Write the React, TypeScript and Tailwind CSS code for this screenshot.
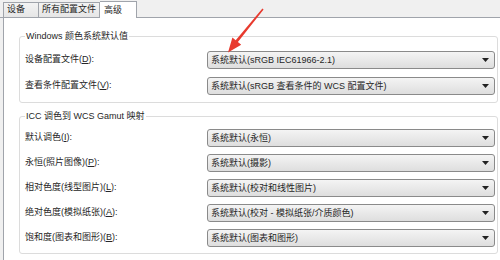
import React from "react";

type Row = { pre: string; key: string; value: string };

const grupo1: Row[] = [
  { pre: "设备配置文件(", key: "D", value: "系统默认(sRGB IEC61966-2.1)" },
  { pre: "查看条件配置文件(", key: "V", value: "系统默认(sRGB 查看条件的 WCS 配置文件)" },
];

const grupo2: Row[] = [
  { pre: "默认调色(", key: "I", value: "系统默认(永恒)" },
  { pre: "永恒(照片图像)(", key: "P", value: "系统默认(摄影)" },
  { pre: "相对色度(线型图片)(", key: "L", value: "系统默认(校对和线性图片)" },
  { pre: "绝对色度(模拟纸张)(", key: "A", value: "系统默认(校对 - 模拟纸张/介质颜色)" },
  { pre: "饱和度(图表和图形)(", key: "B", value: "系统默认(图表和图形)" },
];

function Combo({ value }: { value: string }) {
  return (
    <div className="flex-1 h-[18px] flex items-center justify-between border border-[#8a8a8a] rounded-[3px] bg-gradient-to-b from-[#f4f4f4] to-[#dedede] pl-[3px] pr-[5px]">
      <span className="whitespace-nowrap leading-none">{value}</span>
      <svg width="7" height="4" viewBox="0 0 7 4">
        <path d="M0 0H7L3.5 4Z" fill="#222" />
      </svg>
    </div>
  );
}

function Linha({ row }: { row: Row }) {
  return (
    <div className="flex items-center h-[18px]">
      <span className="w-[182px] whitespace-nowrap">
        {row.pre}
        <span className="underline">{row.key}</span>):
      </span>
      <Combo value={row.value} />
    </div>
  );
}

function Grupo({
  titulo,
  rows,
  className,
}: {
  titulo: string;
  rows: Row[];
  className: string;
}) {
  return (
    <fieldset
      className={`ml-[15px] w-[479px] border border-[#dcdcdc] rounded-[3px] pl-[5px] pr-[2px] ${className}`}
    >
      <legend className="px-[1px] leading-[16px]">{titulo}</legend>
      {rows.map((r, i) => (
        <Linha key={i} row={r} />
      ))}
    </fieldset>
  );
}

export default function App() {
  return (
    <div
      className="relative w-[500px] h-[260px] overflow-hidden bg-[#f0f0f0] text-[9px] text-[#262626] flex flex-col"
      style={{ fontFamily: '"Liberation Sans", "Noto Sans CJK SC", sans-serif' }}
    >
      {/* abas */}
      <div className="flex items-end h-[18px] pl-[3px] border-b border-[#a0a4ab]">
        <div className="h-[15px] w-[36px] flex items-center pl-[3px] border border-b-0 border-[#a0a4ab] bg-gradient-to-b from-[#f3f3f3] to-[#e6e6e6]">
          设备
        </div>
        <div className="h-[15px] w-[61px] flex items-center justify-center border border-l-0 border-b-0 border-[#a0a4ab] bg-gradient-to-b from-[#f3f3f3] to-[#e6e6e6]">
          所有配置文件
        </div>
        <div className="h-[17px] w-[37px] -mb-px flex items-start pt-[2px] pl-[4px] border border-l-0 border-b-0 border-[#a0a4ab] bg-white">
          高级
        </div>
      </div>

      {/* painel */}
      <div className="flex-1 ml-[3px] bg-white border-l border-[#a0a4ab]">
        <Grupo
          titulo="Windows 颜色系统默认值"
          rows={grupo1}
          className="mt-[10px] pt-[7px] pb-[7px] flex flex-col gap-[8px]"
        />
        <Grupo
          titulo="ICC 调色到 WCS Gamut 映射"
          rows={grupo2}
          className="mt-[5px] pt-[5px] pb-[6px] flex flex-col gap-[7px]"
        />
      </div>

      {/* seta vermelha */}
      <svg
        className="absolute inset-0 pointer-events-none"
        width="500"
        height="260"
        viewBox="0 0 500 260"
      >
        <polygon
          points="262.4,8.6 263.6,9.4 237.9,42.1 241.2,44.8 228,52.5 232.4,37.5 235.7,40.2"
          fill="#e83a2e"
        />
      </svg>
    </div>
  );
}
